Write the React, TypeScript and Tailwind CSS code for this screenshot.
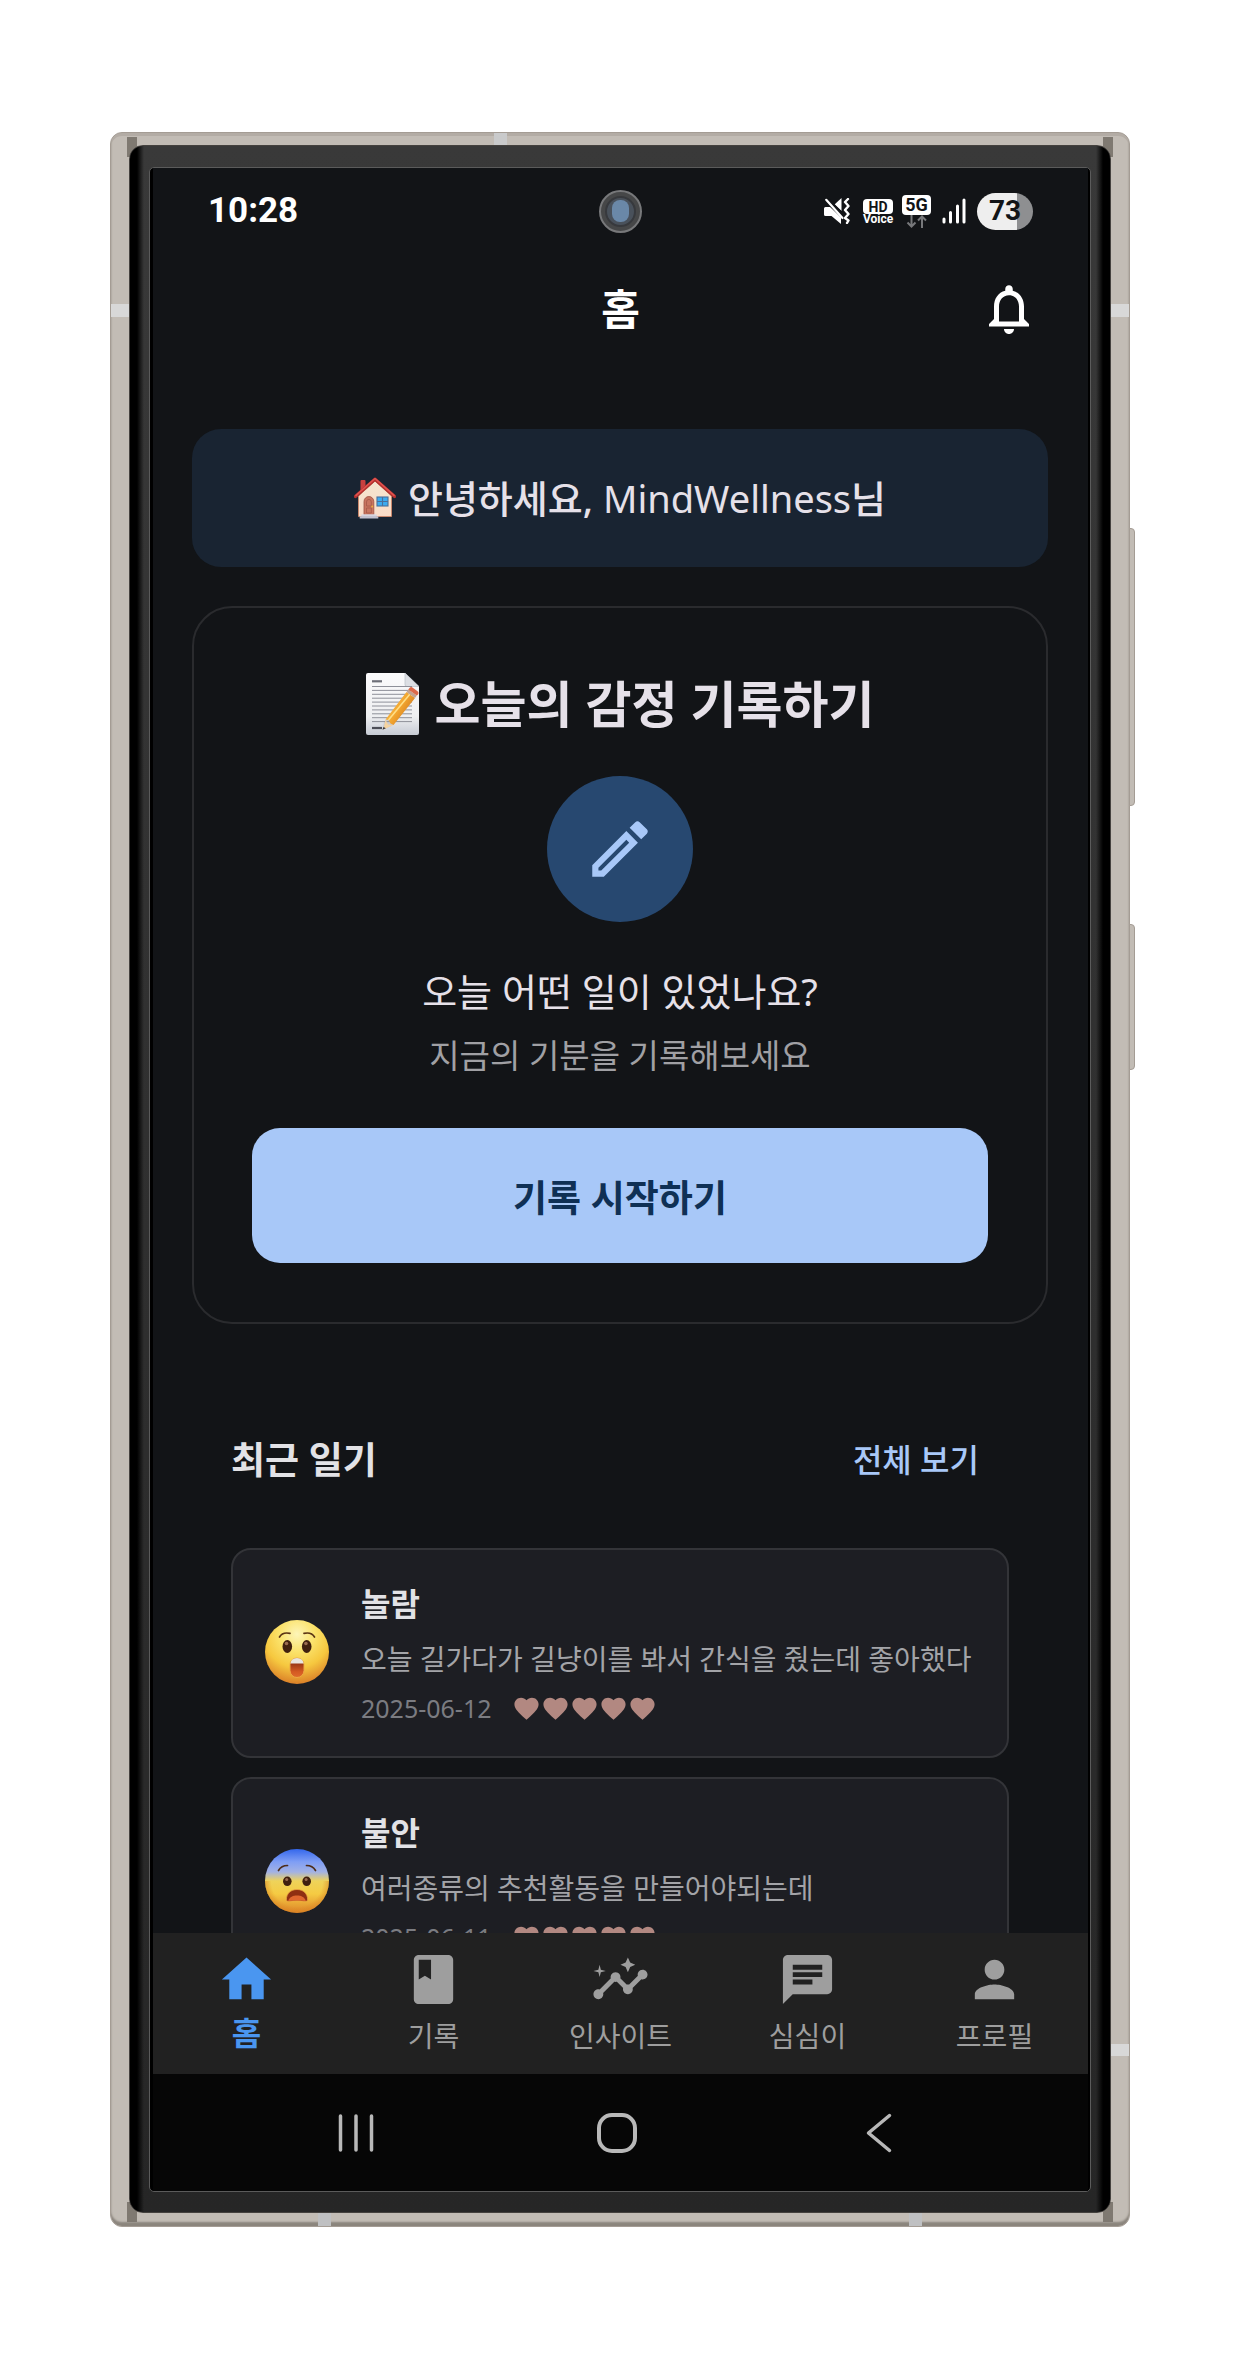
import React from "react";
import {
  MdBook,
  MdChat,
  MdFavorite,
  MdHome,
  MdInsights,
  MdNotificationsNone,
  MdPerson,
} from "react-icons/md";

function HouseEmoji() {
  return (
    <svg viewBox="0 0 42 42" className="h-[42px] w-[42px]" role="img" aria-label="집">
      <defs>
        <linearGradient id="wall" x1="0" y1="0" x2="0" y2="1">
          <stop offset="0" stopColor="#f3e6d0" />
          <stop offset="1" stopColor="#fbdcc8" />
        </linearGradient>
      </defs>
      <rect x="6.500" y="3" width="5" height="11" rx="1" fill="#c9403f" />
      <path d="M4.500 19 21 4l16.500 15v20.500h-33z" fill="url(#wall)" stroke="#d98a68" strokeWidth="0.800" />
      <path d="M1.400 19.500 21 2.200l19.600 17.300" fill="none" stroke="#b5302f" strokeWidth="3.200" strokeLinecap="round" strokeLinejoin="round" />
      <path d="M2 18.400 21 1.500l19 16.900" fill="none" stroke="#e0544f" strokeWidth="1.500" strokeLinecap="round" strokeLinejoin="round" />
      <path d="M10 38V24.500a4.900 5 0 0 1 9.800 0V38z" fill="#c87560" stroke="#9c5142" strokeWidth="0.800" />
      <path d="M12.500 29v-4a2.400 2.600 0 0 1 4.800 0v4zM12.500 31h4.800v5h-4.800z" fill="none" stroke="#a55848" strokeWidth="0.800" />
      <circle cx="18.200" cy="29.500" r="0.900" fill="#f2b33c" />
      <rect x="23" y="20" width="11" height="9" fill="#3cabf0" stroke="#4a6f9a" strokeWidth="1.100" />
      <path d="M28.500 20v9M23 24.500h11" stroke="#4a6f9a" strokeWidth="1.100" />
      <path d="M7.500 37.500h15v1.800h1.800v2.200H5.700v-2.200h1.800z" fill="#c3c1cf" />
      <path d="M7.500 38h15" stroke="#ecebf3" strokeWidth="0.900" />
    </svg>
  );
}

function MemoEmoji() {
  const rows = [13.5, 17.4, 21.3, 25.2, 29.1, 33, 36.9, 40.8, 44.7, 48.6];
  return (
    <svg viewBox="0 0 53 62" className="h-[62px] w-[53px]" role="img" aria-label="메모">
      <defs>
        <linearGradient id="paper" x1="0" y1="0" x2="0" y2="1">
          <stop offset="0" stopColor="#fbfbfc" />
          <stop offset="0.700" stopColor="#eeeff1" />
          <stop offset="1" stopColor="#c6cbd4" />
        </linearGradient>
        <linearGradient id="pencil" x1="0" y1="0" x2="1" y2="0.700">
          <stop offset="0" stopColor="#ffcd5c" />
          <stop offset="0.550" stopColor="#f2a52f" />
          <stop offset="1" stopColor="#c9701c" />
        </linearGradient>
      </defs>
      <path d="M2 0h37l14 13.500V60a2 2 0 0 1-2 2H2a2 2 0 0 1-2-2V2a2 2 0 0 1 2-2z" fill="url(#paper)" />
      <path d="M39 0l14 13.500H41a2 2 0 0 1-2-2z" fill="#dcdfe4" stroke="#b9bec6" strokeWidth="0.700" />
      <path d="M6 8.300h10" stroke="#6d6f78" strokeWidth="2.200" />
      {rows.map((y) => (
        <path key={y} d={`M6 ${y}h40`} stroke="#8e9099" strokeWidth="1" />
      ))}
      <path d="M6 55h10" stroke="#4c4e57" strokeWidth="2.200" />
      <path d="M18 49 40 21l8 5.500L25.500 53l-9 3.500z" fill="#8a8d94" opacity="0.250" />
      <path d="m19.500 46.500 2.500 5 5.500 0.500-10 4.500z" fill="#f5d3a0" />
      <path d="m17.500 54 2.400 1.300-3.400 1.500z" fill="#33343b" />
      <path d="M19.500 46.500 40.500 19l8.500 6-21.500 27-3-1.500-2-3.500z" fill="url(#pencil)" />
      <path d="m22.500 47 21.500-26" stroke="#ffdf86" strokeWidth="1.600" />
      <path d="m40.500 19 1.800-2.400 8.500 6-1.800 2.400z" fill="#c3a38f" />
      <path d="m42.300 16.600 1-1.400a2.500 2.500 0 0 1 3.500-.5l4.700 3.500a2.500 2.500 0 0 1 .5 3.300l-1.200 1.100z" fill="#dd6a4a" />
    </svg>
  );
}

function AstonishedEmoji() {
  return (
    <svg viewBox="0 0 64 64" className="h-16 w-16 shrink-0" role="img" aria-label="놀란 얼굴">
      <defs>
        <radialGradient id="astonished" cx="0.500" cy="0.220" r="0.800">
          <stop offset="0" stopColor="#fdf5b8" />
          <stop offset="0.350" stopColor="#fbe26a" />
          <stop offset="0.650" stopColor="#f6c83f" />
          <stop offset="1" stopColor="#d97a26" />
        </radialGradient>
        <linearGradient id="mouth" x1="0" y1="0" x2="0" y2="1">
          <stop offset="0.200" stopColor="#8f2f12" />
          <stop offset="0.700" stopColor="#d45a22" />
          <stop offset="1" stopColor="#df6a2c" />
        </linearGradient>
      </defs>
      <circle cx="32" cy="32" r="32" fill="url(#astonished)" />
      <path d="M14.500 17c2-3.500 6-4.600 10.500-3.600M49.500 17c-2-3.500-6-4.600-10.500-3.600" fill="none" stroke="#5b3414" strokeWidth="1.700" strokeLinecap="round" />
      <ellipse cx="22.300" cy="26.500" rx="4.800" ry="6.500" fill="#40200f" />
      <ellipse cx="41.700" cy="26.500" rx="4.800" ry="6.500" fill="#40200f" />
      <circle cx="21.500" cy="23.500" r="1.800" fill="#9a6b50" />
      <circle cx="40.900" cy="23.500" r="1.800" fill="#9a6b50" />
      <path d="M25 44.500a7 6.500 0 0 1 14 0V50.500a7 7 0 0 1-14 0z" fill="url(#mouth)" stroke="#eda843" strokeWidth="1" />
      <path d="M25.500 43.500a6.500 5.500 0 0 1 13 0z" fill="#e9e5df" />
    </svg>
  );
}

function AnxiousEmoji() {
  return (
    <svg viewBox="0 0 64 64" className="h-16 w-16 shrink-0" role="img" aria-label="불안한 얼굴">
      <defs>
        <linearGradient id="anxious" x1="0" y1="0" x2="0" y2="1">
          <stop offset="0" stopColor="#3467ec" />
          <stop offset="0.200" stopColor="#7f9ef5" />
          <stop offset="0.360" stopColor="#a3b2e4" />
          <stop offset="0.500" stopColor="#efd35a" />
          <stop offset="0.700" stopColor="#f5cb43" />
          <stop offset="1" stopColor="#dd8428" />
        </linearGradient>
        <radialGradient id="edge" cx="0.500" cy="0.500" r="0.500">
          <stop offset="0.800" stopColor="#d88020" stopOpacity="0" />
          <stop offset="1" stopColor="#d88020" stopOpacity="0.500" />
        </radialGradient>
      </defs>
      <circle cx="32" cy="32" r="32" fill="url(#anxious)" />
      <circle cx="32" cy="32" r="32" fill="url(#edge)" clipPath="inset(50% 0 0 0)" />
      <path d="M13.500 21.500c2-3.500 5-5 9-5M50.500 21.500c-2-3.500-5-5-9-5" fill="none" stroke="#4d2d1a" strokeWidth="1.700" strokeLinecap="round" />
      <ellipse cx="22.300" cy="32.300" rx="4.300" ry="4.800" fill="#40200f" />
      <ellipse cx="41.700" cy="32.300" rx="4.300" ry="4.800" fill="#40200f" />
      <circle cx="21.700" cy="30.500" r="1.500" fill="#9a6b50" />
      <circle cx="41.100" cy="30.500" r="1.500" fill="#9a6b50" />
      <path d="M21.300 51c0-6.500 4.500-10.500 10.700-10.500S42.700 44.500 42.700 51c-1 2.500-4 .8-10.700.8S22.300 53.500 21.300 51z" fill="#8f2f12" stroke="#eda843" strokeWidth="0.800" />
      <path d="M23 51.800c2-4 5-5.300 9-5.300s7 1.300 9 5.300c-2 .3-5-.2-9-.2s-7 .5-9 .2z" fill="#e0672f" />
    </svg>
  );
}

function EditIcon() {
  return (
    <svg viewBox="0 0 24 24" className="h-[74px] w-[74px]" fill="currentColor" aria-hidden="true">
      <path d="M14.060 9.020l.92.920L5.920 19H5v-.920l9.060-9.060M17.660 3c-.250 0-.510.100-.700.290l-1.830 1.830 3.750 3.750 1.830-1.830c.390-.390.390-1.020 0-1.410l-2.340-2.340c-.200-.200-.450-.290-.710-.290zm-3.600 3.190L3 17.250V21h3.750L17.810 9.940l-3.750-3.750z" />
    </svg>
  );
}

function MutedIcon() {
  return (
    <svg viewBox="0 0 27 26" className="h-[26px] w-[27px]" aria-hidden="true">
      <path d="M1.500 9H6l11 10.500V26L7.500 18H1.500A1.500 1.500 0 0 1 0 16.500v-6A1.500 1.500 0 0 1 1.500 9z" fill="#fff" />
      <path d="M10.500 6.500 17.500 0v13z" fill="#fff" />
      <path d="M3.500 0.500l16 16" stroke="#121417" strokeWidth="2" />
      <path d="M2.200 1.800 18.500 20" stroke="#fff" strokeWidth="2.200" strokeLinecap="round" />
      <path d="m24 1-3 3 3.500 4-3.500 4 3.500 4-3.500 4 3.500 2.500-1.500 2.500" fill="none" stroke="#fff" strokeWidth="2.400" strokeLinecap="round" strokeLinejoin="round" />
    </svg>
  );
}

function StatusBar() {
  return (
    <div className="grid h-[86px] shrink-0 grid-cols-[1fr_auto_1fr] items-center px-[55px] font-['Roboto',sans-serif] text-white">
      <span className="text-[35px] leading-10 font-bold">10:28</span>
      <span className="flex h-[43px] w-[43px] items-center justify-center rounded-full border-2 border-[#77787a] bg-[#464748]">
        <span className="flex h-[31px] w-[31px] items-center justify-center rounded-full border-2 border-[#37393d] bg-[#49515b]">
          <span className="h-[22px] w-[17px] rounded-[8px] bg-[#6a88a8]" />
        </span>
      </span>
      <div className="flex items-center justify-end">
        <MutedIcon />
        <span className="ml-3 flex w-[30px] flex-col items-center pt-[2px]">
          <span className="flex h-[15px] w-full items-center justify-center rounded-[4px] bg-white text-[14px] leading-none font-bold text-[#121417]">HD</span>
          <span className="text-[12px] leading-[11px] font-bold">Voice</span>
        </span>
        <span className="ml-[9px] flex w-[29px] flex-col items-center">
          <span className="flex h-5 w-full items-center justify-center rounded-[4px] bg-white text-[18px] leading-none font-bold text-[#121417]">5G</span>
          <svg viewBox="0 0 22 13" className="h-[13px] w-[22px]" fill="none" stroke="#77787b" strokeWidth="2" aria-hidden="true">
            <path d="M5.500 0v11M1.500 7.500l4 4 4-4M16 13V2M12 5.500l4-4 4 4" />
          </svg>
        </span>
        <svg viewBox="0 0 24 26" className="ml-[11px] h-[26px] w-6" stroke="#fff" strokeWidth="3" strokeLinecap="round" aria-hidden="true">
          <path d="M2 24v-3M8.500 24V14.500M15.500 24V8M22 24V2" />
        </svg>
        <span className="ml-[11px] flex h-[37px] w-[56px] items-center justify-center rounded-full bg-[linear-gradient(90deg,#eeeeee_40px,#8e8f91_40px)] text-[28px] leading-none font-bold text-[#121417]">
          73
        </span>
      </div>
    </div>
  );
}

type Entry = {
  mood: string;
  text: string;
  date: string;
  hearts: number;
  face: React.ReactNode;
};

const entries: Entry[] = [
  {
    mood: "놀람",
    text: "오늘 길가다가 길냥이를 봐서 간식을 줬는데 좋아했다",
    date: "2025-06-12",
    hearts: 5,
    face: <AstonishedEmoji />,
  },
  {
    mood: "불안",
    text: "여러종류의 추천활동을 만들어야되는데",
    date: "2025-06-11",
    hearts: 5,
    face: <AnxiousEmoji />,
  },
];

function DiaryCard({ entry }: { entry: Entry }) {
  return (
    <li className="flex items-center gap-8 rounded-[20px] border-2 border-[#333438] bg-[#1d1e23] pt-8 pr-7 pb-[34px] pl-8">
      {entry.face}
      <div className="min-w-0 flex-1">
        <h3 className="text-[32px] leading-[44px] font-bold text-[#e2e2e6]">{entry.mood}</h3>
        <p className="mt-[13px] text-[28px] leading-10 whitespace-nowrap text-[#a3a4a8]">{entry.text}</p>
        <div className="mt-[15px] flex h-7 items-center text-[#7b7c81]">
          <time className="text-[25px] leading-7">{entry.date}</time>
          <span className="ml-5 flex text-[#b28881]" role="img" aria-label={`${entry.hearts}점`}>
            {Array.from({ length: entry.hearts }, (_, i) => (
              <MdFavorite key={i} className="h-[29px] w-[29px]" />
            ))}
          </span>
        </div>
      </div>
    </li>
  );
}

const tabs = [
  { label: "홈", Icon: MdHome, active: true },
  { label: "기록", Icon: MdBook, active: false },
  { label: "인사이트", Icon: MdInsights, active: false },
  { label: "심심이", Icon: MdChat, active: false },
  { label: "프로필", Icon: MdPerson, active: false },
];

function TabBar() {
  return (
    <nav className="grid h-[141px] shrink-0 grid-cols-5 bg-[#212121]">
      {tabs.map(({ label, Icon, active }) => (
        <a
          key={label}
          href="#"
          aria-current={active ? "page" : undefined}
          className={
            active
              ? "flex flex-col items-center pt-[17px] text-[32px] font-bold text-[#4a96f0]"
              : "flex flex-col items-center pt-[17px] text-[28px] text-[#9e9e9e]"
          }
        >
          <Icon className="h-[59px] w-[59px]" />
          <span className={active ? "mt-1 leading-10" : "mt-[7px] leading-10"}>{label}</span>
        </a>
      ))}
    </nav>
  );
}

function SystemNav() {
  return (
    <div className="grid h-[117px] shrink-0 grid-cols-3 items-center bg-[#060606] pr-[78px] pl-[72px] text-[#b8b8b8]">
      <button type="button" aria-label="최근 앱" className="flex justify-center">
        <svg viewBox="0 0 36 40" className="h-10 w-9" stroke="currentColor" strokeWidth="3.500" strokeLinecap="round">
          <path d="M2.500 3v34M18 3v34M33.500 3v34" />
        </svg>
      </button>
      <button type="button" aria-label="홈 화면" className="flex justify-center">
        <svg viewBox="0 0 40 40" className="h-10 w-10" fill="none" stroke="currentColor" strokeWidth="4">
          <rect x="2" y="2" width="36" height="36" rx="13" />
        </svg>
      </button>
      <button type="button" aria-label="뒤로" className="flex justify-center">
        <svg viewBox="0 0 26 40" className="h-10 w-[26px]" fill="none" stroke="currentColor" strokeWidth="3.500" strokeLinecap="round" strokeLinejoin="round">
          <path d="M23.500 2.500 2.500 20l21 17.500" />
        </svg>
      </button>
    </div>
  );
}

function PhoneFrame({ children }: { children: React.ReactNode }) {
  return (
    <div className="relative flex h-full flex-col rounded-[12px] border border-[#a49c94] bg-[#c2bcb5] px-[18px] pt-3 pb-[13px] shadow-[inset_0_3px_0_#b3aca5,inset_0_-4px_2px_#8b857d]">
      {/* antenna breaks */}
      <span className="absolute top-0 left-[383px] h-[13px] w-[13px] bg-[#c9cacb]" />
      <span className="absolute bottom-0 left-[207px] h-[13px] w-[13px] bg-[#bfc0c2]" />
      <span className="absolute right-[207px] bottom-0 h-[13px] w-[13px] bg-[#bfc0c2]" />
      <span className="absolute top-[171px] left-0 h-[13px] w-[18px] bg-[#d8d8d8]" />
      <span className="absolute top-[171px] right-0 h-[13px] w-[18px] bg-[#d8d8d8]" />
      <span className="absolute right-0 bottom-[170px] h-[12px] w-[18px] bg-[#d8d8d8]" />
      {/* corner seams */}
      <span className="absolute top-1 left-4 h-5 w-[10px] bg-[#7f7971]" />
      <span className="absolute top-1 right-4 h-5 w-[10px] bg-[#7f7971]" />
      <span className="absolute bottom-1 left-4 h-5 w-[10px] bg-[#7f7971]" />
      <span className="absolute right-4 bottom-1 h-5 w-[10px] bg-[#7f7971]" />
      {/* side keys */}
      <span className="absolute top-[395px] -right-[6px] h-[278px] w-[6px] rounded-r-[4px] border border-[#a49c94] bg-[#c2bcb5]" />
      <span className="absolute top-[791px] -right-[6px] h-[146px] w-[6px] rounded-r-[4px] border border-[#a49c94] bg-[#c2bcb5]" />
      <div className="relative flex min-h-0 flex-1 flex-col rounded-[14px] border border-[#45423f] bg-[linear-gradient(#393939,#262626)] px-[19px] pt-[21px] pb-5">
        <span className="absolute inset-y-0 left-0 w-[14px] rounded-l-[13px] bg-[linear-gradient(90deg,#000_50%,transparent)]" />
        <span className="absolute inset-y-0 right-0 w-[14px] rounded-r-[13px] bg-[linear-gradient(270deg,#000_50%,transparent)]" />
        <div className="flex min-h-0 flex-1 flex-col rounded-[5px] border border-[#5b5b5b] bg-black pr-[2px] pl-[3px]">
          {children}
        </div>
      </div>
    </div>
  );
}

export default function App() {
  return (
    <div className="h-screen bg-white pt-[132px] pr-[115px] pb-[132px] pl-[110px] font-['Noto_Sans','Noto_Sans_CJK_KR',sans-serif]">
      <PhoneFrame>
        <div className="flex min-h-0 flex-1 flex-col overflow-hidden bg-[#121417]">
          <StatusBar />
          <header className="grid h-[110px] shrink-0 grid-cols-[1fr_auto_1fr] items-center px-[49px] text-white">
            <h1 className="col-start-2 text-[42px] leading-[60px] font-bold">홈</h1>
            <button type="button" aria-label="알림" className="justify-self-end">
              <MdNotificationsNone className="h-[60px] w-[60px]" />
            </button>
          </header>

          <main className="min-h-0 flex-1 overflow-hidden pt-[65px] pr-10 pl-[39px]">
            <p className="flex items-center justify-center gap-3 rounded-[29px] bg-[#192432] py-10 text-[38px] leading-[58px] font-medium text-[#e6e1e9]">
              <HouseEmoji />
              <span>
                안녕하세요, <span className="font-normal">MindWellness</span>님
              </span>
            </p>

            <section className="mt-[39px] flex flex-col items-center rounded-[40px] border-2 border-[#2a2b2e] px-[58px] pt-[65px] pb-[59px]">
              <h2 className="flex items-center gap-4 text-[50px] leading-[60px] font-bold text-[#e6e1e9]">
                <MemoEmoji />
                오늘의 감정 기록하기
              </h2>
              <span className="mt-[41px] flex h-[146px] w-[146px] items-center justify-center rounded-full bg-[#274870] text-[#a8c8f8]">
                <EditIcon />
              </span>
              <p className="mt-11 text-[38px] leading-[50px] text-[#e6e1e9]">오늘 어떤 일이 있었나요?</p>
              <p className="mt-[18px] text-[33px] leading-[44px] text-[#a0a0a4]">지금의 기분을 기록해보세요</p>
              <button
                type="button"
                className="mt-[50px] h-[135px] w-full rounded-[28px] bg-[#a8c8f8] pt-1 text-[37px] leading-[50px] font-bold text-[#0f3055]"
              >
                기록 시작하기
              </button>
            </section>

            <section className="mt-[108px] px-[39px]">
              <div className="flex items-center justify-between pr-[30px]">
                <h2 className="text-[37px] leading-[56px] font-bold text-[#e2e2e6]">최근 일기</h2>
                <a href="#" className="text-[32px] leading-[56px] font-medium text-[#a8c8f8]">
                  전체 보기
                </a>
              </div>
              <ul className="mt-[60px] flex flex-col gap-[19px]">
                {entries.map((entry) => (
                  <DiaryCard key={entry.date} entry={entry} />
                ))}
              </ul>
            </section>
          </main>

          <TabBar />
          <SystemNav />
        </div>
      </PhoneFrame>
    </div>
  );
}
